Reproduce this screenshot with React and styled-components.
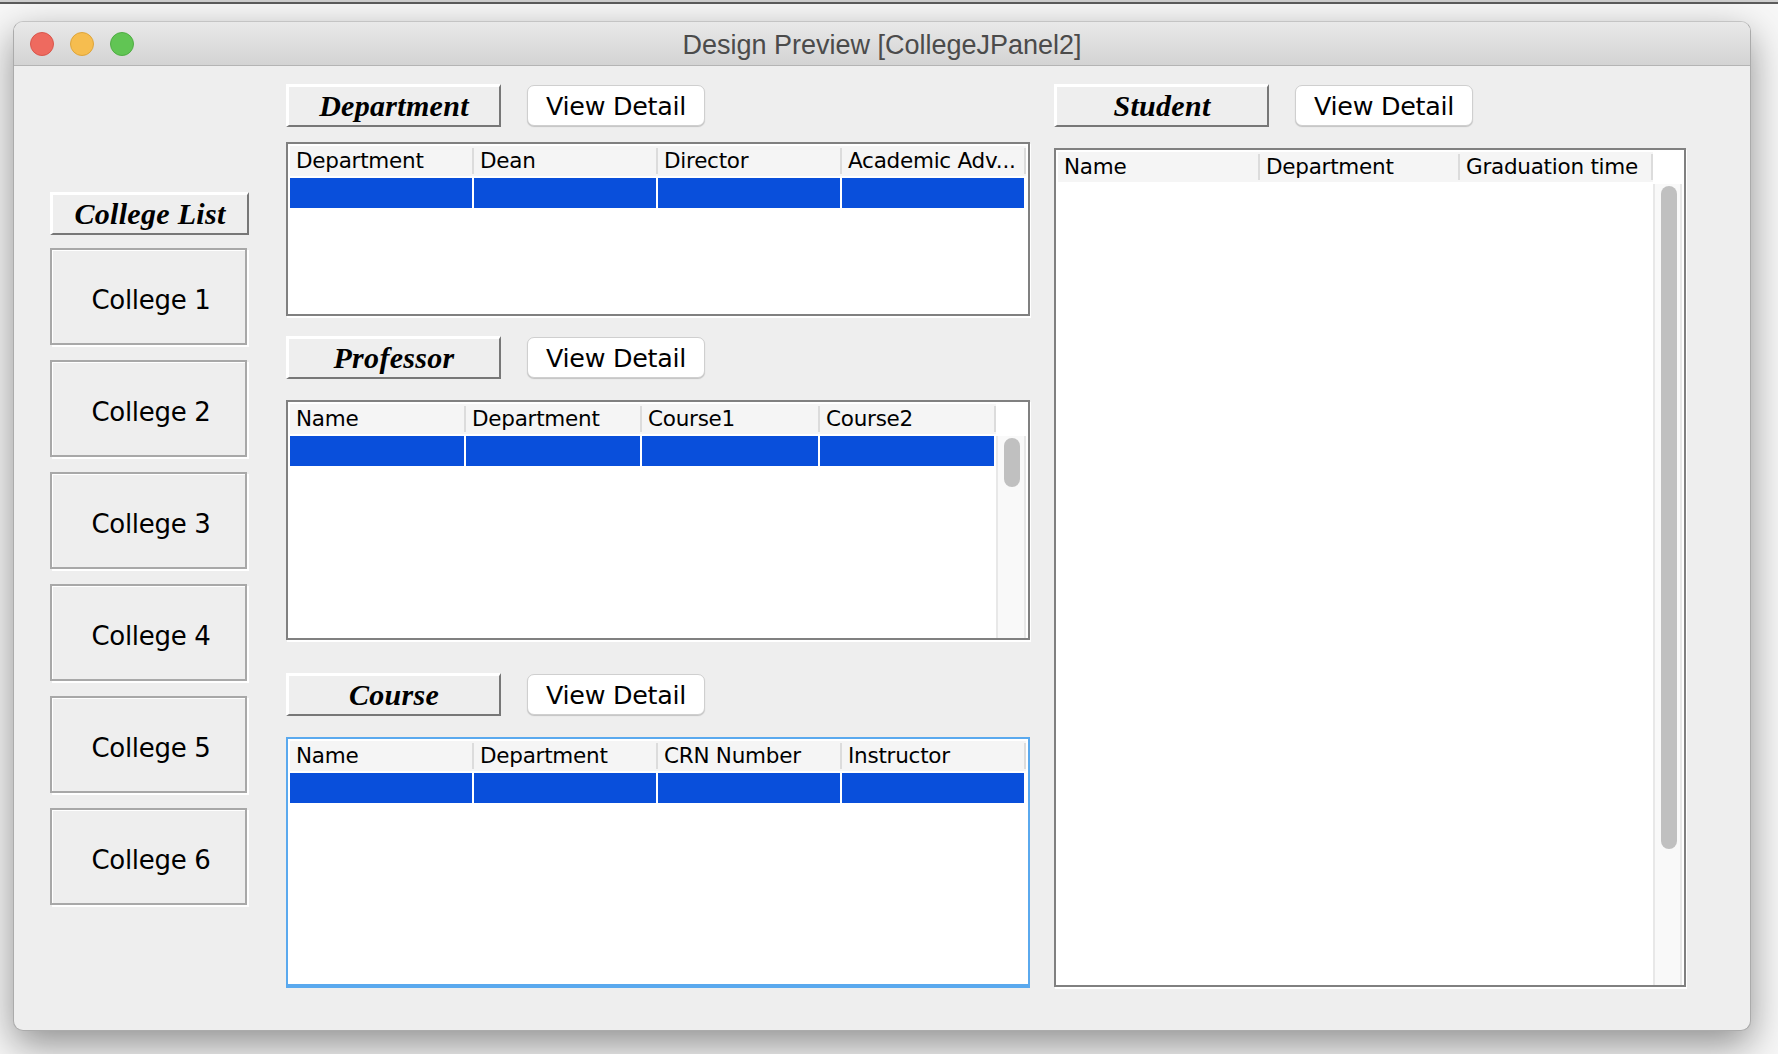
import React from "react";
import styled, { createGlobalStyle } from "styled-components";

const Global = createGlobalStyle`
  html, body { margin: 0; padding: 0; background: #f7f7f7; }
  body { width: 1778px; height: 1054px; overflow: hidden; font-family: "DejaVu Sans", sans-serif; color: #000; }
  * { box-sizing: border-box; }
`;

const ScreenEdge = styled.div`
  height: 4px;
  background: linear-gradient(#cfcfcf 0 2px, #5c5c5c 2px 4px);
`;
const Desktop = styled.div`
  height: 1050px;
  padding: 17px 27px 0 13px;
  background: #f7f7f7;
`;
const Window = styled.div`
  height: 1010px;
  display: flex;
  flex-direction: column;
  background: #eeeeee;
  border-radius: 10px;
  border: 1px solid #ababab;
  border-top-color: #c4c4c4;
  box-shadow: 0 14px 38px rgba(0, 0, 0, 0.42);
  overflow: hidden;
`;
const TitleBar = styled.div`
  position: relative;
  flex: none;
  height: 44px;
  display: flex;
  align-items: center;
  justify-content: center;
  background: linear-gradient(#e9e9e9, #d3d3d3);
  border-bottom: 1px solid #b4b4b4;
`;
const Lights = styled.div`
  position: absolute;
  left: 16px;
  top: 10px;
  display: flex;
  gap: 16px;
`;
const Light = styled.span`
  width: 24px;
  height: 24px;
  border-radius: 50%;
  background: ${(p) => p.$fill};
  border: 1px solid ${(p) => p.$edge};
`;
const Title = styled.div`
  font-family: "Liberation Sans", sans-serif;
  font-size: 27px;
  color: #4b4b4b;
  padding-top: 3px;
`;
const Content = styled.div`
  flex: 1;
  display: flex;
  padding: 18px 0 0 36px;
`;
const LeftColumn = styled.div`
  width: 199px;
  margin-right: 37px;
  padding-top: 108px;
  display: flex;
  flex-direction: column;
`;
const Label = styled.div`
  width: ${(p) => p.$width}px;
  height: 43px;
  display: flex;
  align-items: center;
  justify-content: center;
  background: #eeeeee;
  border-style: solid;
  border-width: 3px 2px 2px 3px;
  border-color: #fff #777 #777 #fff;
  font-family: "Liberation Serif", serif;
  font-style: italic;
  font-weight: 700;
  font-size: 30px;
  letter-spacing: 0.3px;
  white-space: nowrap;
`;
const CollegeList = styled.div`
  margin-top: 13px;
  display: flex;
  flex-direction: column;
  gap: 15px;
`;
const CollegeButton = styled.div`
  width: 197px;
  height: 97px;
  display: flex;
  align-items: center;
  justify-content: center;
  border: 2px solid #a8a8a8;
  box-shadow: inset 1px 1px 0 #fff, 2px 2px 0 #fff;
  background: #eeeeee;
  font-size: 26px;
  letter-spacing: -0.3px;
  padding: 6px 0 0 5px;
`;
const MiddleColumn = styled.div`
  width: 744px;
  margin-right: 24px;
`;
const RightColumn = styled.div`
  width: 632px;
`;
const Section = styled.section`
  margin-top: ${(p) => p.$before || 0}px;
`;
const ButtonRow = styled.div`
  display: flex;
  align-items: center;
  gap: 26px;
`;
const ViewButton = styled.div`
  width: 178px;
  height: 41px;
  display: flex;
  align-items: center;
  justify-content: center;
  background: #fff;
  border: 1px solid #cfcfcf;
  border-radius: 7px;
  box-shadow: 0 1px 1px rgba(0, 0, 0, 0.18);
  font-size: 25.4px;
  letter-spacing: -0.3px;
`;
const TableFrame = styled.div`
  margin-top: ${(p) => p.$gap}px;
  height: ${(p) => p.$height}px;
  padding: 2px;
  display: flex;
  flex-direction: column;
  background: #fff;
  border-style: solid;
  border-color: ${(p) => (p.$focus ? "#5aa9ee" : "#808080")};
  border-width: ${(p) => (p.$focus ? "2px 2px 4px 2px" : "2px")};
  box-shadow: ${(p) => (p.$focus ? "none" : "1px 2px 0 #fff")};
`;
const HeadRow = styled.div`
  flex: none;
  height: 30px;
  display: grid;
  width: ${(p) => p.$width}px;
  grid-template-columns: ${(p) => p.$cols};
  background: #f5f5f5;
`;
const HeadCell = styled.div`
  margin: 2px 0;
  padding: 0 0 1px 6px;
  display: flex;
  align-items: center;
  font-size: 21.5px;
  letter-spacing: -0.25px;
  white-space: nowrap;
  overflow: hidden;
  border-right: 2px solid #dcdcdc;
`;
const TableBody = styled.div`
  flex: 1;
  display: flex;
  margin-top: 2px;
  min-height: 0;
`;
const Rows = styled.div`
  width: ${(p) => p.$width}px;
  flex: none;
`;
const SelectedRow = styled.div`
  height: 30px;
  display: grid;
  grid-template-columns: ${(p) => p.$cols};
`;
const SelectedCell = styled.div`
  background: #094fdb;
  margin-right: 2px;
`;
const Track = styled.div`
  width: 30px;
  margin-bottom: -2px;
  padding: 2px 0 0 6px;
  background: #f9f9f9;
  border-left: 2px solid #e8e8e8;
  border-right: 2px solid #e8e8e8;
`;
const Thumb = styled.div`
  width: 16px;
  height: ${(p) => p.$height}px;
  background: #c0c0c0;
  border-radius: 8px;
`;

const Table = ({ columns, cols, width, gap, height, selected = true, focus, thumb }) => (
  <TableFrame $gap={gap} $height={height} $focus={focus}>
    <HeadRow $cols={cols} $width={width}>
      {columns.map((c) => (
        <HeadCell key={c}>{c}</HeadCell>
      ))}
    </HeadRow>
    <TableBody>
      <Rows $width={width}>
        {selected && (
          <SelectedRow $cols={cols}>
            {columns.map((c) => (
              <SelectedCell key={c} />
            ))}
          </SelectedRow>
        )}
      </Rows>
      {thumb && (
        <Track>
          <Thumb $height={thumb} />
        </Track>
      )}
    </TableBody>
  </TableFrame>
);

const Header = ({ name }) => (
  <ButtonRow>
    <Label $width={215}>{name}</Label>
    <ViewButton>View Detail</ViewButton>
  </ButtonRow>
);

const colleges = ["College 1", "College 2", "College 3", "College 4", "College 5", "College 6"];

export default function App() {
  return (
    <>
      <Global />
      <ScreenEdge />
      <Desktop>
        <Window>
          <TitleBar>
            <Lights>
              <Light $fill="#ee6a5f" $edge="#d9564c" />
              <Light $fill="#f6bd4f" $edge="#dea53b" />
              <Light $fill="#61c554" $edge="#50ad44" />
            </Lights>
            <Title>Design Preview [CollegeJPanel2]</Title>
          </TitleBar>
          <Content>
            <LeftColumn>
              <Label $width={199}>College List</Label>
              <CollegeList>
                {colleges.map((c) => (
                  <CollegeButton key={c}>{c}</CollegeButton>
                ))}
              </CollegeList>
            </LeftColumn>
            <MiddleColumn>
              <Section>
                <Header name="Department" />
                <Table
                  gap={15}
                  height={174}
                  width={736}
                  cols="repeat(4, 184px)"
                  columns={["Department", "Dean", "Director", "Academic Adv..."]}
                />
              </Section>
              <Section $before={20}>
                <Header name="Professor" />
                <Table
                  gap={21}
                  height={240}
                  width={706}
                  cols="176px 176px 178px 176px"
                  columns={["Name", "Department", "Course1", "Course2"]}
                  thumb={49}
                />
              </Section>
              <Section $before={33}>
                <Header name="Course" />
                <Table
                  gap={21}
                  height={251}
                  width={736}
                  cols="repeat(4, 184px)"
                  columns={["Name", "Department", "CRN Number", "Instructor"]}
                  focus
                />
              </Section>
            </MiddleColumn>
            <RightColumn>
              <Section>
                <Header name="Student" />
                <Table
                  gap={21}
                  height={839}
                  width={595}
                  cols="202px 200px 193px"
                  columns={["Name", "Department", "Graduation time"]}
                  selected={false}
                  thumb={663}
                />
              </Section>
            </RightColumn>
          </Content>
        </Window>
      </Desktop>
    </>
  );
}
